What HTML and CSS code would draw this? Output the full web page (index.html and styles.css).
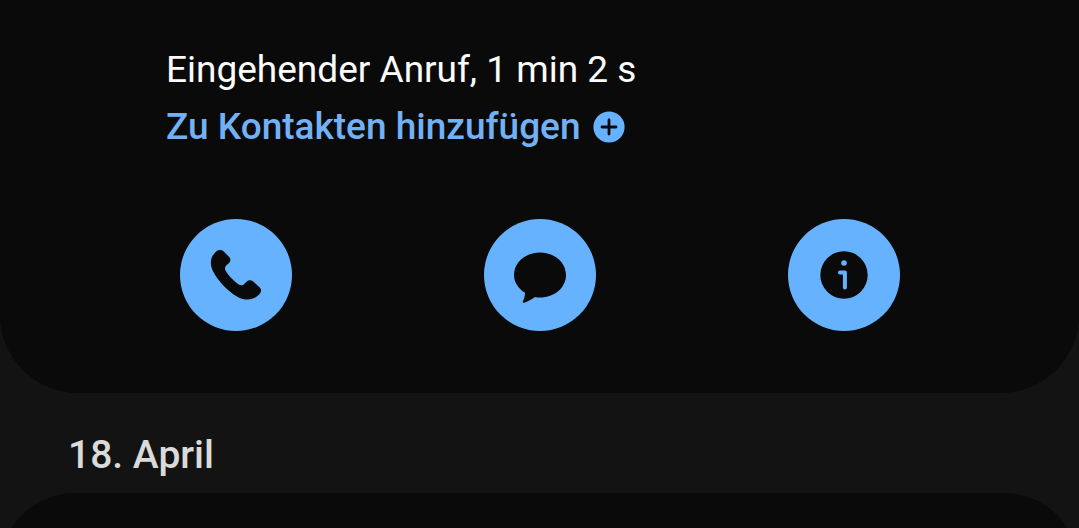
FILE: index.html
```html
<!DOCTYPE html>
<html lang="de">

<head>
    <meta charset="UTF-8">
    <meta name="viewport" content="width=device-width, initial-scale=1.0">
    <title>Anrufliste</title>
    <link rel="stylesheet" href="styles.css">
</head>

<body>
    <section class="call-card">
        <p class="call-type"><span>Eingehender Anruf, 1 min 2 s</span></p>
        <a class="add-contact" href="#">
            <span>Zu Kontakten hinzufügen</span>
            <svg class="plus-icon" viewBox="0 0 32 32">
                <circle cx="16" cy="16" r="15.6" fill="#66b2ff" />
                <path d="M16 9v14M9 16h14" stroke="#0a0a0a" stroke-width="2.8" stroke-linecap="round" />
            </svg>
        </a>
        <div class="actions">
            <button class="action" aria-label="Anrufen">
                <svg viewBox="0 0 112 112">
                    <path d="M36.5 32.2C38.5 30.6 41.7 30.6 43.7 32.4L49.2 38.1C50.9 39.9 50.8 42.2 49.1 43.9L46.2 46.5C44.7 48 44.6 50.1 45.8 52.1C48.4 56.5 53.4 61.8 58.3 65.2C60.7 66.9 62.7 66.7 64.5 64.8L66.8 62.5C68.7 60.8 71.3 60.8 73.2 62.4L79.5 68.2C81.6 70.2 81.6 72.7 79.8 74.7C76.9 78.2 72.5 80.6 67.6 80.6C62.3 80.6 57.4 78.5 51.4 73.8C44.3 68.3 37.1 60.3 33.4 53C31.2 48.7 30.6 45.4 31 42C31.4 38.2 33.4 34.7 36.5 32.2Z" />
                </svg>
            </button>
            <button class="action" aria-label="Nachricht">
                <svg viewBox="0 0 112 112">
                    <path d="M56 33.5C70.5 33.5 82 43.4 82 56C82 68.6 70.5 78.5 56 78.5C54.2 78.5 52.6 78.3 51 77.9C47.8 80.2 43.7 82.6 40 83.8C39.1 84 38.6 83.3 38.9 82.5C40.2 79.7 41 76.9 41 73.8C34.4 69.7 30 63.3 30 56C30 43.4 41.5 33.5 56 33.5Z" />
                </svg>
            </button>
            <button class="action" aria-label="Details">
                <svg viewBox="0 0 112 112">
                    <circle cx="56" cy="56" r="23.7" />
                    <circle cx="56" cy="44" r="2.8" fill="#66b2ff" />
                    <path d="M52 53.5h4.9v15" fill="none" stroke="#66b2ff" stroke-width="4" stroke-linecap="round" stroke-linejoin="round" />
                </svg>
            </button>
        </div>
    </section>
    <h2 class="date"><span>18. April</span></h2>
    <div class="next-wrap">
        <section class="next-card"></section>
    </div>
</body>

</html>
```
FILE: styles.css
```css
* {
    box-sizing: border-box;
}

body {
    display: flex;
    flex-direction: column;
    height: 528px;
    margin: 0;
    overflow: hidden;
    background-color: #131313;
    font-family: Roboto, sans-serif;
}

.call-card {
    flex: none;
    height: 393px;
    padding: 41px 179px 0 166px;
    background-color: #0a0a0a;
    border-radius: 0 0 78px 78px;
}

.call-type {
    margin: 0;
    color: #fcfcfc;
    font-size: 37px;
    line-height: 57px;
    white-space: nowrap;
}

.add-contact {
    display: flex;
    align-items: center;
    gap: 12px;
    height: 57px;
    color: #72b1f5;
    font-size: 37px;
    font-weight: 500;
    line-height: 57px;
    text-decoration: none;
    white-space: nowrap;
}

.plus-icon {
    width: 32px;
    height: 32px;
}

.actions {
    display: flex;
    justify-content: space-between;
    margin: 64px 0 0 14px;
}

.action {
    width: 112px;
    height: 112px;
    padding: 0;
    border: 0;
    border-radius: 50%;
    background-color: #66b2ff;
    color: #0a0a0a;
}

.action svg {
    display: block;
    width: 112px;
    height: 112px;
    fill: currentColor;
}

.date {
    flex: none;
    height: 100px;
    margin: 0;
    padding-left: 68px;
    color: #dadada;
    font-size: 39px;
    font-weight: 500;
    line-height: 125px;
}

.next-wrap {
    flex: 1;
    min-height: 0;
    overflow: hidden;
}

.next-card {
    height: 160px;
    background-color: #0a0a0a;
    border-radius: 75px 75px 0 0;
}
```
